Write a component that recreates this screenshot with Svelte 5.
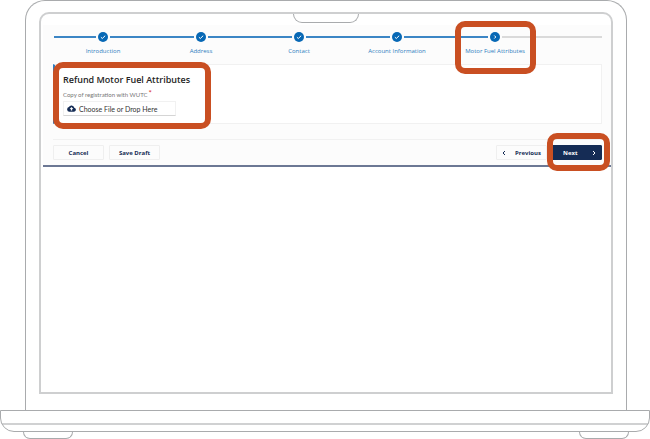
<script lang="ts">
	interface Step {
		label: string;
		state: 'done' | 'current';
	}

	const steps: Step[] = [
		{ label: 'Introduction', state: 'done' },
		{ label: 'Address', state: 'done' },
		{ label: 'Contact', state: 'done' },
		{ label: 'Account Information', state: 'done' },
		{ label: 'Motor Fuel Attributes', state: 'current' }
	];
</script>

<div class="laptop">
	<div class="lid">
		<div class="screen">
			<div class="notch"></div>
			<main class="app">
				<ol class="stepper">
					{#each steps as step (step.label)}
						<li class="step {step.state}" aria-current={step.state === 'current' ? 'step' : undefined}>
							<div class="track">
								<span class="line"></span>
								<svg class="node" viewBox="0 0 10 10" aria-hidden="true">
									<circle cx="5" cy="5" r="5" fill="#0768b5" />
									{#if step.state === 'done'}
										<path d="M2.9 5.2 4.3 6.5 7.2 3.7" />
									{:else}
										<path d="M4.3 3.5 5.8 5 4.3 6.5" />
									{/if}
								</svg>
								<span class="line after"></span>
							</div>
							<span class="step-label">{step.label}</span>
							{#if step.state === 'current'}
								<span class="highlight"></span>
							{/if}
						</li>
					{/each}
					<li class="rest" aria-hidden="true"><span class="line after"></span></li>
				</ol>

				<section class="panel">
					<h1>Refund Motor Fuel Attributes</h1>
					<label class="field-label" for="wutc-file">
						Copy of registration with WUTC <span class="required">*</span>
					</label>
					<label class="upload">
						<input id="wutc-file" type="file" required />
						<svg class="cloud" viewBox="0 0 18 14" aria-hidden="true">
							<path
								fill="#152c55"
								d="M14.6 5.5A5.8 5.8 0 0 0 3.8 4.2 4.8 4.8 0 0 0 4.7 13.6H14.2A4.1 4.1 0 0 0 14.6 5.5Z"
							/>
							<path fill="#fff" d="M9 4.2 12.6 8H10.4V11H7.6V8H5.4Z" />
						</svg>
						Choose File or Drop Here
					</label>
					<span class="highlight"></span>
				</section>

				<footer class="actions">
					<button type="button">Cancel</button>
					<button type="button">Save Draft</button>
					<button type="button" class="previous">
						<svg class="chevron" viewBox="0 0 6 6" aria-hidden="true"><path d="M4 1 2 3 4 5" /></svg>
						Previous
					</button>
					<div class="next-wrap">
						<button type="button" class="next">
							Next
							<svg class="chevron" viewBox="0 0 6 6" aria-hidden="true"><path d="M2 1 4 3 2 5" /></svg>
						</button>
						<span class="highlight"></span>
					</div>
				</footer>
			</main>
		</div>
	</div>
	<div class="base"></div>
	<div class="feet">
		<span class="foot"></span>
		<span class="foot"></span>
	</div>
</div>

<style>
	:global(body) {
		background: #fff;
	}

	.laptop,
	.laptop * {
		box-sizing: border-box;
	}

	.laptop {
		display: flex;
		flex-direction: column;
		min-height: 100vh;
		font-family: 'Open Sans', 'Noto Sans', sans-serif;
		color: #152c55;
	}

	.lid {
		display: flex;
		flex: 1;
		margin: 0 23px 0 25px;
		padding: 11px 13px 16px;
		border: 1px solid #a9abad;
		border-bottom: 0;
		border-radius: 20px 20px 0 0;
	}

	.screen {
		flex: 1;
		min-width: 0;
		border: 2px solid #cecfd0;
		border-radius: 10px 10px 0 0;
	}

	.notch {
		width: 66px;
		height: 9px;
		margin: 0 auto;
		border: 1px solid #a9abad;
		border-top: 0;
		border-radius: 0 0 9px 9px;
	}

	.app {
		margin: 2px 0 0 2px;
		padding: 6px 9px 5px 10px;
		background: #fcfcfc;
		border-bottom: 2px solid #6c7894;
	}

	.stepper {
		display: grid;
		grid-template-columns: repeat(5, 98fr) 58fr;
		margin: 0;
		padding: 0 0 0 1px;
		list-style: none;
	}

	.step {
		position: relative;
		text-align: center;
	}

	.track {
		display: flex;
		align-items: center;
		gap: 2px;
		height: 12px;
	}

	.line {
		flex: 1;
		height: 2px;
		background: #3c86c5;
	}

	.node {
		width: 10px;
		height: 10px;
	}

	.node path {
		fill: none;
		stroke: #fff;
		stroke-width: 1;
	}

	.current .after,
	.rest .line {
		background: #dadada;
	}

	.rest {
		display: flex;
		align-items: center;
		height: 12px;
	}

	.step-label {
		display: block;
		margin-top: 4px;
		font-size: 6px;
		line-height: 9px;
		white-space: nowrap;
		color: #2e7dc0;
	}

	.highlight {
		position: absolute;
		z-index: 1;
		border: 6px solid #c94f22;
		border-radius: 10px;
		pointer-events: none;
	}

	.step .highlight {
		inset: -10px 8px -18px 9px;
	}

	.panel {
		position: relative;
		margin-top: 8px;
		padding: 8px 9px 7px 8px;
		background: #fff;
		border: 1px solid #f1f1f1;
		border-left: 2px solid #2e7dc0;
	}

	.panel .highlight {
		top: -3px;
		bottom: -6px;
		left: -2px;
		width: 158px;
	}

	h1 {
		margin: 0;
		font-size: 9px;
		font-weight: 600;
		line-height: 14px;
		color: #242424;
	}

	.field-label {
		display: flex;
		gap: 1px;
		margin: 4px 0 2px;
		font-family: Lato, 'Open Sans', sans-serif;
		font-size: 6px;
		line-height: 8px;
		color: #777;
	}

	.required {
		font-size: 8px;
		line-height: 4px;
		color: #dc3030;
	}

	.upload {
		position: relative;
		display: flex;
		align-items: center;
		gap: 3px;
		width: 113px;
		height: 15px;
		padding-left: 3px;
		border: 1px solid #f1f1f1;
		border-bottom-color: #d5d5d5;
		font-family: Lato, 'Open Sans', sans-serif;
		font-size: 7px;
		white-space: nowrap;
		color: #333;
	}

	.upload input {
		position: absolute;
		inset: 0;
		width: 100%;
		opacity: 0;
	}

	.cloud {
		width: 9px;
		height: 7px;
	}

	.actions {
		display: flex;
		gap: 5px;
		margin-top: 15px;
		padding-top: 5px;
		border-top: 1px solid #f1f1f1;
	}

	button {
		display: flex;
		align-items: center;
		justify-content: center;
		width: 51px;
		height: 15px;
		padding: 0;
		background: #fcfcfc;
		border: 1px solid #efefef;
		border-radius: 1px;
		font: 700 6px 'Open Sans', 'Noto Sans', sans-serif;
		color: #152c55;
	}

	.chevron {
		width: 6px;
		height: 6px;
		fill: none;
		stroke: currentColor;
		stroke-width: 1;
	}

	.previous {
		justify-content: space-between;
		margin-left: auto;
		padding: 0 5px 0 4px;
	}

	.next-wrap {
		position: relative;
	}

	.next {
		justify-content: space-between;
		width: 50px;
		padding: 0 4px 0 10px;
		background: #152c55;
		border-color: #152c55;
		color: #fff;
	}

	.next-wrap .highlight {
		inset: -12px -8px -11px -5px;
	}

	.base {
		height: 22px;
		border: 1px solid #a9abad;
		border-radius: 0 0 14px 14px;
		background: linear-gradient(#d0d1d2, #d0d1d2) 0 12px / 100% 2px no-repeat;
	}

	.feet {
		display: flex;
		justify-content: space-between;
		padding: 0 21px 0 23px;
	}

	.foot {
		width: 50px;
		height: 7px;
		border: 1px solid #a9abad;
		border-top: 0;
		border-radius: 0 0 8px 8px;
	}
</style>
